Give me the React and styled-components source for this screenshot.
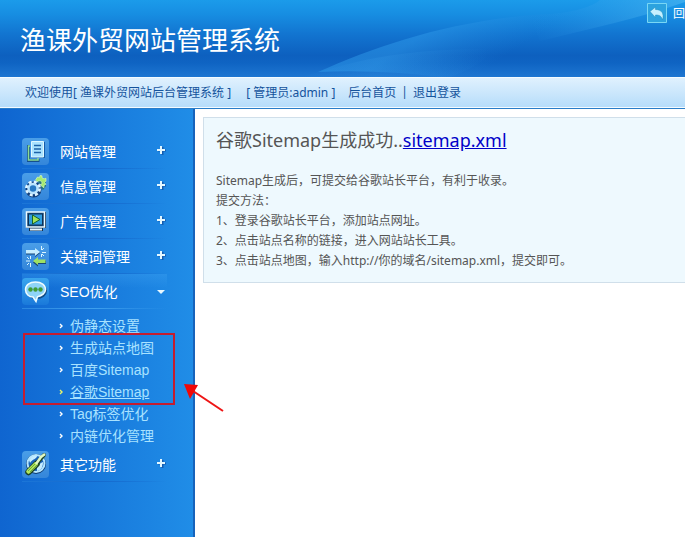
import React from 'react'
import styled, { createGlobalStyle } from 'styled-components'

const GlobalStyle = createGlobalStyle`
    * {
        box-sizing: border-box;
    }
    body {
        margin: 0;
        background: #fff;
        font-family: "Noto Sans", "Noto Sans CJK SC", sans-serif;
        font-size: 12px;
    }
    h1, h2, p, ul {
        margin: 0;
        padding: 0;
        font-weight: normal;
    }
    ul {
        list-style: none;
    }
`

const Page = styled.div`
    display: flex;
    flex-direction: column;
    min-height: 100vh;
    overflow: hidden;
`

const Header = styled.header`
    position: relative;
    display: flex;
    justify-content: space-between;
    height: 77px;
    overflow: hidden;
    background: linear-gradient(#1b9bea 0%, #178ee2 18%, #1274d0 45%, #0d60bf 72%, #0f64c3 82%, #1e76d1 100%);
`

const Waves = styled.svg`
    position: absolute;
    top: 0;
    right: 0;
    width: 385px;
    height: 77px;
`

const Title = styled.h1`
    position: relative;
    padding: 20px 0 0 20px;
    color: #fff;
    font-size: 26px;
    line-height: 40px;
    white-space: nowrap;
`

const BackLink = styled.a`
    position: relative;
    display: flex;
    align-items: center;
    gap: 6px;
    height: 20px;
    margin-top: 3px;
    color: #fff;
    text-decoration: none;

    svg {
        display: block;
    }
`

const WelcomeBar = styled.div`
    display: flex;
    align-items: center;
    height: 32px;
    padding: 0 0 3px 25px;
    border-top: 1px solid #f4fbff;
    border-bottom: 1px solid #2a7dc8;
    background: linear-gradient(#e0f1fe, #b5dcfa);
    box-shadow: inset 0 -1px #f4fbff;
    color: #14539c;
    white-space: nowrap;
`

const Admin = styled.span`
    margin: 0 13px 0 15px;
`

const BarLink = styled.a`
    color: #14539c;
    text-decoration: none;
`

const Divider = styled.span`
    margin: 0 5px;
`

const Main = styled.div`
    display: flex;
    flex: 1;
`

const Sidebar = styled.nav`
    flex: 0 0 195px;
    padding: 25px 26px 0 22px;
    border-right: 2px solid #1763bb;
    background: linear-gradient(90deg, #0f65d0, #208de7);
    font-family: "Liberation Sans", "Noto Sans CJK SC", sans-serif;
    font-size: 14px;
`

const MenuButton = styled.button`
    display: flex;
    align-items: center;
    width: 100%;
    height: 35px;
    padding: 0;
    border: 0;
    background-color: transparent;
    background-image: ${props => props.$open
        ? 'linear-gradient(90deg, #2a86e0, #3d9fee 50%, transparent), linear-gradient(rgba(60, 160, 240, .4), transparent 40%)'
        : 'linear-gradient(90deg, #1b76d8, #1569cc 50%, transparent)'};
    background-position: bottom, top;
    background-size: 100% 1px, 100% 100%;
    background-repeat: no-repeat;
    color: #fff;
    font: inherit;
    text-align: left;

    span {
        flex: 1;
        margin-left: 11px;
        padding-bottom: 2px;
    }
`

const IconTile = styled.svg`
    width: 27px;
    height: 27px;
    border-radius: 4px;
    background: ${props => props.$open ? 'linear-gradient(#39a5ee, #1a79da)' : 'linear-gradient(#4a9ee8, #3486da)'};
`

const Toggle = styled.svg`
    width: 9px;
    height: 14px;
    margin-bottom: 2px;
    margin-right: 1px;
`

const SubMenu = styled.ul`
    position: relative;
    padding: 5px 0 1px 37px;
`

const SubItem = styled.li`
    display: flex;
    align-items: center;
    height: 22px;
    white-space: nowrap;

    svg {
        margin: 2px 7px 0 0;
    }
`

const SubLink = styled.a`
    color: #a8e2ff;
    text-decoration: ${props => props.$active ? 'underline' : 'none'};
`

const Marker = styled.svg`
    position: absolute;
    top: 23px;
    left: 0;
    width: 204px;
    height: 82px;
    pointer-events: none;
`

const Content = styled.main`
    flex: 1;
    min-width: 0;
    padding: 8px 0 0 8px;
`

const Panel = styled.section`
    padding: 8px 12px 11px;
    border: 1px solid #d0dfea;
    border-right: 0;
    background: #eef9fe;
    color: #555;
    line-height: 20px;
`

const PanelTitle = styled.h2`
    margin-bottom: 17px;
    font-size: 18px;
    line-height: 28px;
`

const FileLink = styled.a`
    color: #0000c8;
`

const icons = {
    site: (
        <>
            <path d="M8 8.500H6.500V22.500H16V21" fill="none" stroke="#164f8d" strokeWidth="3" />
            <path d="M8 8H6.500V22H16V20" fill="none" stroke="#8bdc94" strokeWidth="1.500" />
            <path d="M10 4h13v16H10z" fill="#145caa" />
            <path d="M9.500 3.500h12v15.500h-12z" fill="#a9e2ff" stroke="#dff8ff" />
            <path d="M12 7.500h7M12 11h7M12 14.500h7" stroke="#1d63a8" strokeWidth="1.500" />
        </>
    ),
    info: (
        <>
            <path d="M14 8c0-3 4-5 7-2l3-1v8l-3 4-3-3 2-2" fill="#16652f" opacity=".6" />
            <path d="M13.500 7l2-3 2 .5.500-2 2 .3v2l2 1 2-.5v3l-1.500 1 1.500 2-2 1v2.500l-4-3 2-1c0-3-2-4-5-2z" fill="#a5ea70" stroke="#e0ffc8" strokeWidth=".6" />
            <circle cx="11.500" cy="16.500" r="6" fill="none" stroke="#123f7c" strokeWidth="4" />
            <circle cx="11" cy="15.500" r="6.500" fill="none" stroke="#e0f5ff" strokeWidth="3" strokeDasharray="2.900 2.205" />
            <circle cx="11" cy="15.500" r="4.500" fill="#2779c4" stroke="#b9e4ff" strokeWidth="2.500" />
        </>
    ),
    ads: (
        <>
            <path d="M4 4h20v16H4zM7 20h14v3H7z" fill="#102f4e" />
            <path d="M4.500 4h18v15h-18z" fill="#174a79" stroke="#edfaff" strokeWidth="1.500" />
            <path d="M6.500 6h14v11h-14z" fill="#309ee0" stroke="#0d2f55" />
            <path d="M10.500 7l7.500 4.500-7.500 4.500z" fill="#a4e457" stroke="#176329" />
            <path d="M8 21.500h12" stroke="#e8f7ff" strokeWidth="2" />
        </>
    ),
    keyword: (
        <>
            <path d="M4 8.500h9V6l5 4-5 4v-2.500H4zM24 17.500h-8V15l-5 4.500 5 4V21h8z" fill="#164477" />
            <path d="M4 7h9V5l5 4-5 4v-2.500H4z" fill="#c6edff" />
            <path d="M23.500 16.500H16V14l-5 4 5 4v-2h7.500z" fill="#9de064" />
            <path d="M19.500 3v4M20 9.500h4M19.500 11v3M8.500 13v3M4 18h4M8.500 20v4M5 14l2 2M5 22l2-2M22 5l-2 2M22 13l-2-2" stroke="#d9f5ff" />
        </>
    ),
    seo: (
        <>
            <ellipse cx="14.500" cy="13" rx="10.500" ry="8" fill="#114c87" />
            <path d="M13.500 4C7.500 4 3.500 7 3.500 11.500S7 19 11 19l3 4.500 1.500-4.800C20 18 23.500 15 23.500 11.500 23.500 7 19.500 4 13.500 4z" fill="#8fd4f7" stroke="#edfbff" strokeWidth="1.500" />
            <circle cx="8.500" cy="11.500" r="2.200" fill="#3f9c36" />
            <circle cx="13.500" cy="11.500" r="2.200" fill="#3f9c36" />
            <circle cx="18.500" cy="11.500" r="2.200" fill="#3f9c36" />
        </>
    ),
    other: (
        <>
            <circle cx="14" cy="13" r="10" fill="#0c3970" />
            <circle cx="14" cy="12.500" r="8.500" fill="#1863b9" stroke="#b4e6ff" strokeWidth="2" />
            <path d="M7 9c2-4 5-5 8-4 0 3-5 3-7 7zM15 20c5-1 6-5 6-9-3 1-5 4-6 5z" fill="#c6edff" />
            <path d="M6.500 21l8-8" stroke="#1c4227" strokeWidth="6.500" strokeLinecap="round" />
            <path d="M14 13l8-9" stroke="#1c4227" strokeWidth="4" strokeLinecap="round" />
            <path d="M6.500 20.500l7-7" stroke="#b2e65b" strokeWidth="4.500" strokeLinecap="round" />
            <path d="M14 13l5-7 4-3" stroke="#e0f8c5" strokeWidth="2.500" fill="none" />
            <path d="M6 20l7-7M8 21l7-7" stroke="#5b9a35" strokeWidth=".8" />
        </>
    )
}

const seoLinks = ['伪静态设置', '生成站点地图', '百度Sitemap', '谷歌Sitemap', 'Tag标签优化', '内链优化管理']

function MenuItem(props) {
    return (
        <MenuButton type="button" $open={props.open} aria-expanded={!!props.open}>
            <IconTile viewBox="0 0 27 27" $open={props.open} aria-hidden="true">
                {icons[props.icon]}
            </IconTile>
            <span>{props.label}</span>
            <Toggle viewBox="0 0 9 14" aria-hidden="true">
                {props.open
                    ? <path d="M0 6h8L4 10z" fill="#e8f8ff" />
                    : <>
                        <path d="M1 6.500h8M5.500 3v8" stroke="#145caf" strokeWidth="2" />
                        <path d="M0 6h8M4 2v8" stroke="#e3f7ff" strokeWidth="2" />
                    </>}
            </Toggle>
        </MenuButton>
    )
}

export default function App() {
    return (
        <Page>
            <GlobalStyle />
            <Header>
                <Waves viewBox="0 0 385 77" aria-hidden="true">
                    <defs>
                        <linearGradient id="wave" gradientUnits="userSpaceOnUse" x1="130" y1="30" x2="175" y2="100">
                            <stop offset="0" stopColor="#2f9bea" stopOpacity=".5" />
                            <stop offset=".75" stopColor="#2388dd" stopOpacity="0" />
                        </linearGradient>
                        <linearGradient id="ripple" x1="0" y1="0" x2="1" y2="0">
                            <stop offset="0" stopColor="#3597e5" stopOpacity="0" />
                            <stop offset=".4" stopColor="#3597e5" stopOpacity=".25" />
                            <stop offset="1" stopColor="#3597e5" stopOpacity="0" />
                        </linearGradient>
                        <linearGradient id="corner" x1="1" y1="0" x2="0" y2="0">
                            <stop offset="0" stopColor="#4fb8f2" stopOpacity=".6" />
                            <stop offset="1" stopColor="#2b95e5" stopOpacity="0" />
                        </linearGradient>
                    </defs>
                    <path d="M18 72C85 42 170 14 275 13C265 45 200 77 140 77C100 72 60 70 18 72z" fill="url(#wave)" />
                    <path d="M20 72C70 56 120 49 190 49C185 62 170 70 150 77H0z" fill="url(#ripple)" />
                    <path d="M240 41C290 29 340 18 385 2V0H300C290 8 270 14 230 15z" fill="url(#corner)" />
                </Waves>
                <Title>渔课外贸网站管理系统</Title>
                <BackLink href="#">
                    <svg width="20" height="20" viewBox="0 0 20 20" aria-hidden="true">
                        <path d="M.5.500h19v19H.5z" fill="#2ca3df" stroke="#79d7f5" />
                        <path d="M3 8.500L8.500 4v2.500c6 0 9 4 7 10.500-1-4-3-5-7-5v2.500z" fill="#c5f0ff" stroke="#178abd" strokeWidth=".5" />
                    </svg>
                    回
                </BackLink>
            </Header>
            <WelcomeBar>
                <span>欢迎使用[ 渔课外贸网站后台管理系统 ]</span>
                <Admin>[ 管理员:admin ]</Admin>
                <BarLink href="#">后台首页</BarLink>
                <Divider>|</Divider>
                <BarLink href="#">退出登录</BarLink>
            </WelcomeBar>
            <Main>
                <Sidebar>
                    <MenuItem icon="site" label="网站管理" />
                    <MenuItem icon="info" label="信息管理" />
                    <MenuItem icon="ads" label="广告管理" />
                    <MenuItem icon="keyword" label="关键词管理" />
                    <MenuItem icon="seo" label="SEO优化" open />
                    <SubMenu>
                        {seoLinks.map(label => (
                            <SubItem key={label}>
                                <svg width="4" height="6" viewBox="0 0 4 6" aria-hidden="true">
                                    <path d="M1 1l2 2-2 2" fill="none" stroke={label === '谷歌Sitemap' ? '#e8f56a' : '#fff'} strokeWidth="1.400" />
                                </svg>
                                <SubLink href="#" $active={label === '谷歌Sitemap'}>{label}</SubLink>
                            </SubItem>
                        ))}
                        <Marker viewBox="0 0 204 82" aria-hidden="true">
                            <path d="M2 2h150v70H2z" fill="none" stroke="#c51d30" strokeWidth="2" />
                            <path d="M171 59l30 20" stroke="#ee1515" strokeWidth="2" />
                            <path d="M162 52l14 1-8 14z" fill="#f00808" />
                        </Marker>
                    </SubMenu>
                    <MenuItem icon="other" label="其它功能" />
                </Sidebar>
                <Content>
                    <Panel>
                        <PanelTitle>谷歌Sitemap生成成功..<FileLink href="#">sitemap.xml</FileLink></PanelTitle>
                        <p>Sitemap生成后，可提交给谷歌站长平台，有利于收录。</p>
                        <p>提交方法：</p>
                        <p>1、登录谷歌站长平台，添加站点网址。</p>
                        <p>2、点击站点名称的链接，进入网站站长工具。</p>
                        <p>3、点击站点地图，输入http://你的域名/sitemap.xml，提交即可。</p>
                    </Panel>
                </Content>
            </Main>
        </Page>
    )
}
